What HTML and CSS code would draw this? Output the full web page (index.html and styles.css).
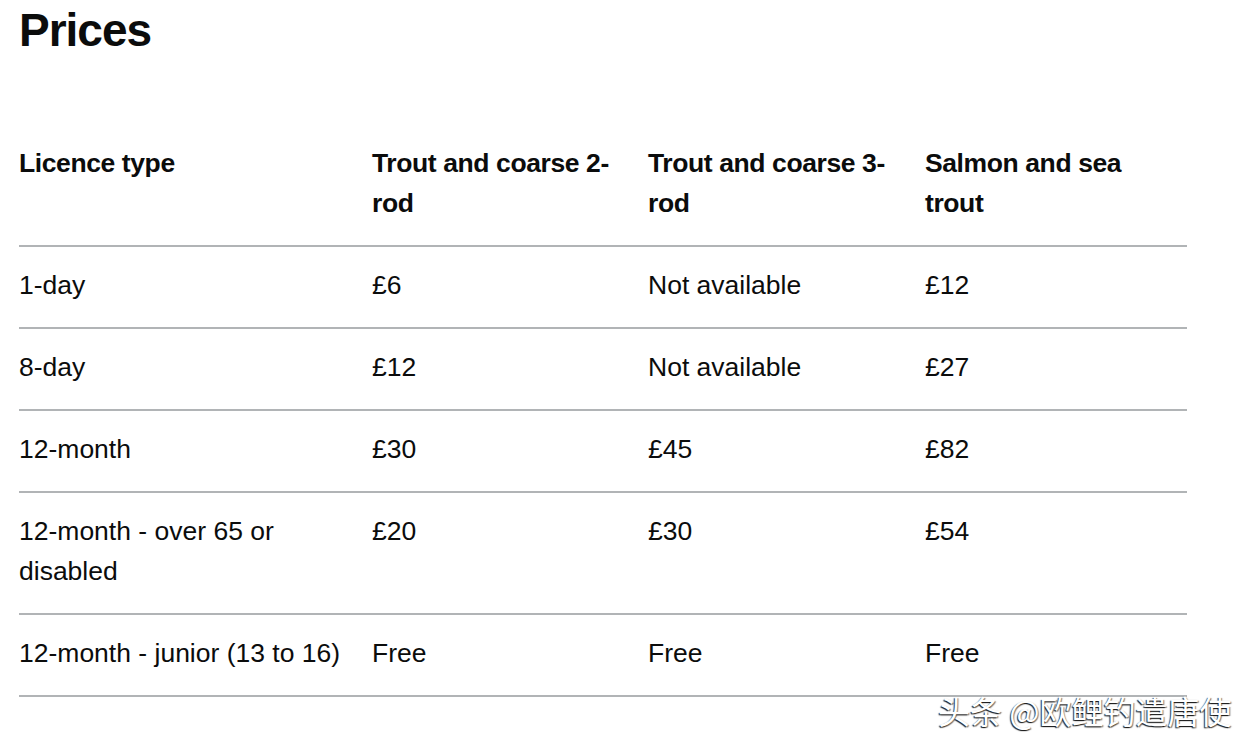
FILE: index.html
```html
<!DOCTYPE html>
<html lang="en">
<head>
<meta charset="utf-8">
<title>Prices</title>
<link rel="stylesheet" href="styles.css">
</head>
<body>
<main class="page">
  <h2 class="title">Prices</h2>
  <table class="prices">
    <colgroup>
      <col class="c1"><col class="c2"><col class="c3"><col class="c4">
    </colgroup>
    <thead>
      <tr>
        <th>Licence type</th>
        <th>Trout and coarse 2-rod</th>
        <th>Trout and coarse 3-rod</th>
        <th>Salmon and sea trout</th>
      </tr>
    </thead>
    <tbody>
      <tr><td>1-day</td><td>£6</td><td>Not available</td><td>£12</td></tr>
      <tr><td>8-day</td><td>£12</td><td>Not available</td><td>£27</td></tr>
      <tr><td>12-month</td><td>£30</td><td>£45</td><td>£82</td></tr>
      <tr><td>12-month - over 65 or disabled</td><td>£20</td><td>£30</td><td>£54</td></tr>
      <tr><td>12-month - junior (13 to 16)</td><td>Free</td><td>Free</td><td>Free</td></tr>
    </tbody>
  </table>
  <div class="watermark">头条 @欧鲤钓遣唐使</div>
</main>
</body>
</html>
```

FILE: styles.css
```css
html, body {
  margin: 0;
  padding: 0;
  background: #ffffff;
}

body {
  font-family: "Liberation Sans", Arial, sans-serif;
  color: #0b0c0c;
}

.page {
  position: relative;
  padding: 0 19px;
  width: 1168px;
  height: 742px;
}

.title {
  margin: 7px 0 0 0;
  font-size: 46px;
  line-height: 46px;
  font-weight: 700;
  letter-spacing: -1px;
}

.prices {
  margin-top: 72px;
  width: 1168px;
  border-collapse: collapse;
  table-layout: fixed;
  font-size: 26.5px;
  line-height: 40px;
}

.c1 { width: 353px; }
.c2 { width: 276px; }
.c3 { width: 277px; }
.c4 { width: 262px; }

.prices th,
.prices td {
  padding: 18px 20px 22px 0;
  text-align: left;
  vertical-align: top;
  border-bottom: 2px solid #b1b4b6;
}

.prices th {
  font-weight: 700;
  letter-spacing: -0.4px;
}

.prices td {
  font-weight: 400;
}

.watermark {
  position: absolute;
  left: 938px;
  top: 683px;
  font-family: "Noto Sans CJK SC", "Liberation Sans", sans-serif;
  font-size: 32px;
  line-height: 40px;
  color: #ffffff;
  white-space: nowrap;
  text-shadow: -1px 1px 1px rgba(0, 0, 0, 0.85), 1px 1px 1px rgba(0, 0, 0, 0.5);
}
```
